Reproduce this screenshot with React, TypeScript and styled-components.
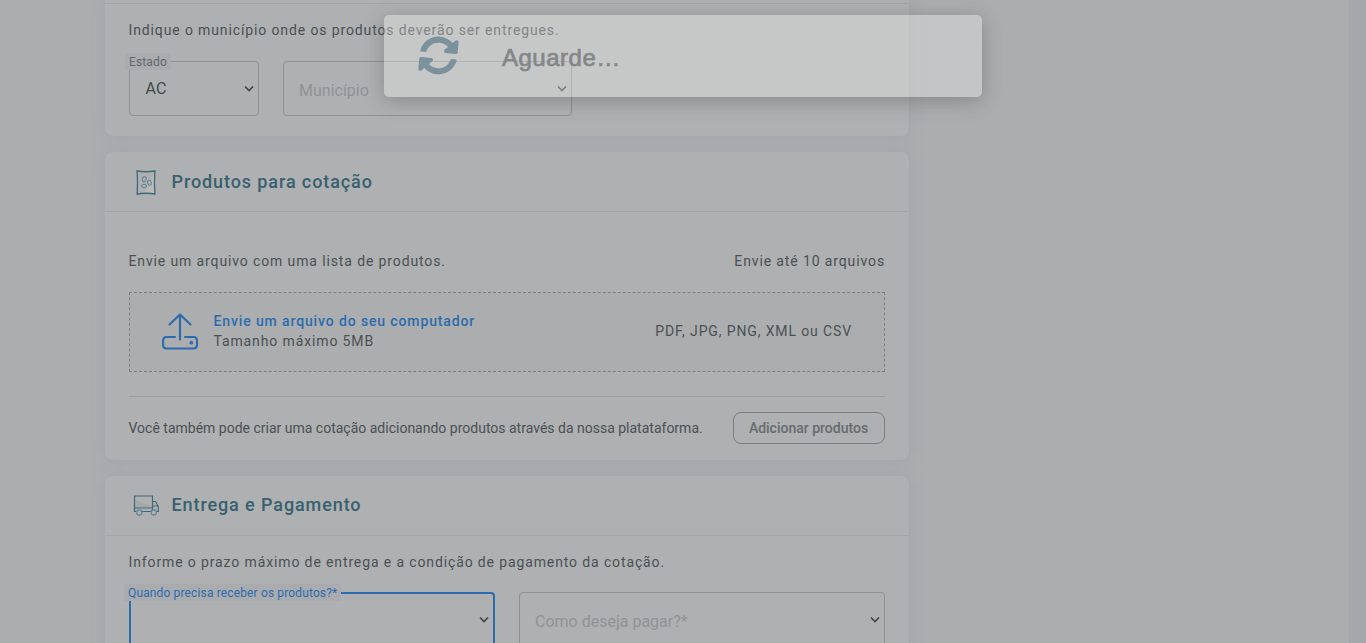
import React from "react";
import styled, { createGlobalStyle } from "styled-components";
import { FaSyncAlt } from "react-icons/fa";

const GlobalStyle = createGlobalStyle`
  *, *::before, *::after { box-sizing: border-box; }
  body {
    margin: 0;
    overflow: hidden;
    background: #abadae;
    color: #4b5053;
    font-family: Roboto, "Liberation Sans", sans-serif;
    font-size: 14px;
  }
`;

const Page = styled.div`
  display: flex;
  justify-content: space-between;
  height: 643px;
  overflow: hidden;
`;

const Content = styled.main`
  display: flex;
  flex-direction: column;
  gap: 16px;
  width: 804px;
  margin-left: 105px;
`;

const ScrollTrack = styled.div`
  width: 17px;
  background: #a6a7ab;
`;

const Card = styled.section<{ $height: number; $clipped?: boolean }>`
  flex: none;
  height: ${(p) => p.$height}px;
  border-radius: ${(p) => (p.$clipped ? "0 0 8px 8px" : "8px")};
  background: #aeb0b1;
  box-shadow: 0 0 16px rgba(154, 155, 172, 0.48);
`;

const CardHeader = styled.header<{ $height: number; $lift?: number }>`
  display: flex;
  align-items: center;
  height: ${(p) => p.$height}px;
  padding: 0 0 ${(p) => p.$lift ?? 0}px 24px;
  border-bottom: 1px solid #a4a5a8;
`;

const HeaderIcon = styled.span`
  display: flex;
  justify-content: center;
  width: 34px;
  margin: 1px 8.5px 0 0;
`;

const Title = styled.h2`
  margin: 0;
  color: #38606f;
  font-size: 18px;
  font-weight: 500;
  letter-spacing: 0.9px;
  line-height: 24px;
`;

const Body = styled.div<{ $top: number }>`
  padding: ${(p) => p.$top}px 24px 0;
`;

const Text = styled.p<{ $tight?: boolean }>`
  margin: 0 0 0 -0.5px;
  font-size: 14px;
  line-height: 20px;
  letter-spacing: ${(p) => (p.$tight ? "0" : "0.875px")};
  white-space: nowrap;
`;

const Split = styled.div`
  display: flex;
  align-items: center;
  justify-content: space-between;
`;

const Fields = styled.div<{ $top: number }>`
  display: flex;
  gap: 24px;
  margin-top: ${(p) => p.$top}px;
`;

const Field = styled.div<{ $width: number; $focused?: boolean }>`
  position: relative;
  display: flex;
  align-items: center;
  justify-content: space-between;
  width: ${(p) => p.$width}px;
  height: 55px;
  padding: 0 4px 0 15px;
  border: ${(p) => (p.$focused ? "2px solid #2c6cae" : "1px solid #8e9092")};
  border-radius: 4px;
`;

const FieldLabel = styled.span<{ $focused?: boolean }>`
  position: absolute;
  top: ${(p) => (p.$focused ? -10 : -9)}px;
  left: ${(p) => (p.$focused ? -7 : -5)}px;
  height: 17px;
  padding: 1px 4px 0;
  background: #a9abae;
  color: ${(p) => (p.$focused ? "#2c6cae" : "#64686b")};
  font-size: 12px;
  letter-spacing: 0.14px;
  line-height: 17px;
  white-space: nowrap;
`;

const FieldValue = styled.span<{ $placeholder?: boolean }>`
  padding: ${(p) => (p.$placeholder ? "5px 0 0" : "0 0 0 0.6px")};
  color: ${(p) => (p.$placeholder ? "#919396" : "#43484b")};
  font-size: 16px;
  line-height: 20px;
`;

const DropZone = styled.div`
  display: flex;
  align-items: center;
  height: 80px;
  margin-top: 21px;
  padding: 0 32px 2px;
  border: 1px dashed #7d8082;
  background: #abadae;
`;

const DropText = styled.div`
  flex: 1;
  margin-left: 15px;
`;

const DropTitle = styled(Text)`
  color: #2c6cae;
  font-weight: 500;
`;

const Footer = styled(Split)`
  margin-top: 24px;
  padding-top: 15px;
  border-top: 1px solid #999b9d;
`;

const Button = styled.button`
  width: 152px;
  height: 32px;
  padding: 0 1px 0 0;
  border: 1px solid #7c7f81;
  border-radius: 8px;
  background: transparent;
  color: #666b6e;
  font-family: inherit;
  font-size: 14px;
  font-weight: 500;
`;

const Toast = styled.div`
  position: absolute;
  top: 15px;
  left: 384px;
  display: flex;
  align-items: center;
  width: 598px;
  height: 82px;
  padding-left: 34px;
  border-radius: 5px;
  background: rgba(255, 255, 255, 0.3);
  box-shadow: 0 4px 20px rgba(60, 60, 60, 0.32);
`;

const Spinner = styled(FaSyncAlt)`
  width: 39px;
  height: 39px;
  margin: 0 0 1px 1px;
  color: #7b929d;
  transform: rotate(5deg);
`;

const ToastText = styled.span`
  margin: 4px 0 0 44px;
  color: #858688;
  font-family: "Liberation Sans", Arial, sans-serif;
  font-size: 24px;
  letter-spacing: 0.5px;
  line-height: 28px;
  -webkit-text-stroke: 0.7px #858688;
`;

const Chevron = () => (
  <svg width="10" height="8" viewBox="0 0 10 8" fill="none" stroke="#3f4447" strokeWidth="1.6">
    <path d="M1 1.5l4 4 4-4" />
  </svg>
);

const PackageIcon = () => (
  <svg width="20" height="25" viewBox="0 0 20 25" fill="none">
    <path d="M8 24L18 5V23Z" fill="#b8babb" />
    <path
      d="M1 1Q10 2.500 19 1L18.700 4Q18.300 12 18.700 20L19 24Q10 22.500 1 24L1.300 21Q1.700 12 1.300 4Z"
      stroke="#416877"
      strokeWidth="1.3"
    />
    <g stroke="#628391">
      <ellipse cx="8.3" cy="9.2" rx="1.9" ry="2.6" transform="rotate(15 8.3 9.2)" />
      <ellipse cx="13.5" cy="12.8" rx="1.8" ry="2.5" transform="rotate(-20 13.5 12.8)" />
      <ellipse cx="8" cy="16" rx="2.5" ry="1.8" />
    </g>
  </svg>
);

const TruckIcon = () => (
  <svg width="26" height="21" viewBox="0 0 26 21" fill="none">
    <path d="M2 4Q8 9 19 10V12.5H2Z" fill="#a5a8aa" />
    <path d="M3.5 16.5H1.5V1H19.5V16.5H9" stroke="#416877" strokeWidth="1.2" />
    <path d="M1.5 13H19.5M19.5 6.5H22.5L25.3 11.5V16.5H23.5M20 11H25" stroke="#416877" strokeWidth="1.1" />
    <circle cx="6.3" cy="17.5" r="2.6" fill="#aeb0b1" stroke="#628391" strokeWidth="1.1" />
    <circle cx="20.8" cy="17.5" r="2.6" fill="#aeb0b1" stroke="#628391" strokeWidth="1.1" />
  </svg>
);

const UploadIcon = () => (
  <svg
    width="37"
    height="37"
    viewBox="0.5 0.5 37 37"
    fill="none"
    stroke="#2c6cae"
    strokeWidth="2.1"
    strokeLinecap="round"
    strokeLinejoin="round"
  >
    <path d="M18.5 27V2M8 12L18.5 2L29 12" />
    <path d="M13.5 24.5H5Q1.6 24.5 1.6 28V32.5Q1.6 36 5 36H32Q35.5 36 35.5 32.5V28Q35.5 24.5 32 24.5H23.5" />
    <circle cx="29.8" cy="30.2" r="0.8" />
  </svg>
);

export default function App() {
  return (
    <Page>
      <GlobalStyle />
      <Content>
        <Card $height={136} $clipped>
          <CardHeader $height={4} />
          <Body $top={16}>
            <Text>Indique o município onde os produtos deverão ser entregues.</Text>
            <Fields $top={21}>
              <Field $width={130}>
                <FieldLabel>Estado</FieldLabel>
                <FieldValue>AC</FieldValue>
                <Chevron />
              </Field>
              <Field $width={289}>
                <FieldValue $placeholder>Município</FieldValue>
                <Chevron />
              </Field>
            </Fields>
          </Body>
        </Card>

        <Card $height={308}>
          <CardHeader $height={60}>
            <HeaderIcon>
              <PackageIcon />
            </HeaderIcon>
            <Title>Produtos para cotação</Title>
          </CardHeader>
          <Body $top={39}>
            <Split>
              <Text>Envie um arquivo com uma lista de produtos.</Text>
              <Text>Envie até 10 arquivos</Text>
            </Split>
            <DropZone>
              <UploadIcon />
              <DropText>
                <DropTitle>Envie um arquivo do seu computador</DropTitle>
                <Text>Tamanho máximo 5MB</Text>
              </DropText>
              <Text>PDF, JPG, PNG, XML ou CSV</Text>
            </DropZone>
            <Footer>
              <Text $tight>
                Você também pode criar uma cotação adicionando produtos através da nossa platataforma.
              </Text>
              <Button>Adicionar produtos</Button>
            </Footer>
          </Body>
        </Card>

        <Card $height={300}>
          <CardHeader $height={60} $lift={2}>
            <HeaderIcon>
              <TruckIcon />
            </HeaderIcon>
            <Title>Entrega e Pagamento</Title>
          </CardHeader>
          <Body $top={16}>
            <Text>Informe o prazo máximo de entrega e a condição de pagamento da cotação.</Text>
            <Fields $top={20}>
              <Field $width={366} $focused>
                <FieldLabel $focused>Quando precisa receber os produtos?*</FieldLabel>
                <FieldValue />
                <Chevron />
              </Field>
              <Field $width={366}>
                <FieldValue $placeholder>Como deseja pagar?*</FieldValue>
                <Chevron />
              </Field>
            </Fields>
          </Body>
        </Card>
      </Content>
      <ScrollTrack />
      <Toast>
        <Spinner />
        <ToastText>Aguarde…</ToastText>
      </Toast>
    </Page>
  );
}
